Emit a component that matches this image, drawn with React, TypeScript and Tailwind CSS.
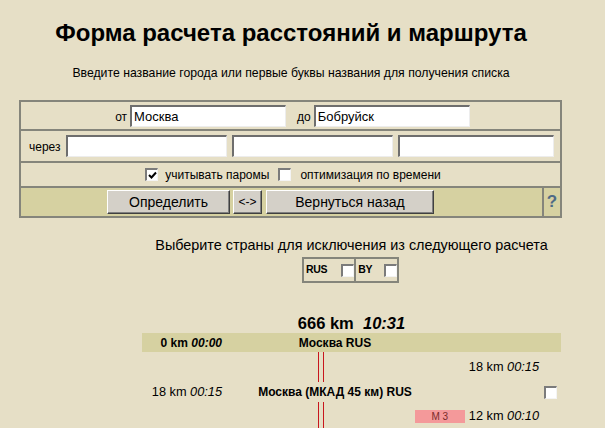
import React from "react";

// Старый "виндовый" чекбокс: белое поле с вдавленной рамкой
function Box({ checked = false }: { checked?: boolean }) {
  return (
    <span className="inline-flex h-[13px] w-[13px] shrink-0 items-center justify-center border-t-2 border-l-2 border-b border-r border-t-[#7b7b7b] border-l-[#7b7b7b] border-b-[#f4f4f4] border-r-[#f4f4f4] bg-white">
      {checked && (
        <svg width="9" height="9" viewBox="0 0 9 9">
          <path d="M1 4 L3.5 6.5 L8 1.5" stroke="#000" strokeWidth="2" fill="none" />
        </svg>
      )}
    </span>
  );
}

function Field({ value = "", w }: { value?: string; w: string }) {
  return (
    <div
      className={`${w} flex h-[22px] items-center border-t-2 border-l-2 border-b border-r border-t-[#6e6e6e] border-l-[#6e6e6e] border-b-[#ededed] border-r-[#ededed] bg-white pl-[2px] text-[13px] text-black`}
    >
      {value}
    </div>
  );
}

function Btn({ children, w }: { children: React.ReactNode; w: string }) {
  return (
    <div
      className={`${w} flex h-[24px] items-center justify-center border border-t-white border-l-white border-b-[#404040] border-r-[#404040] bg-[#d4d0c8] text-[14px] text-black shadow-[inset_-1px_-1px_0_#808080]`}
    >
      {children}
    </div>
  );
}

function RedLine() {
  return <div className="h-full w-[6px] border-l border-r border-[#c8161d]" />;
}

export default function App() {
  return (
    <div className="min-h-[428px] w-[605px] overflow-hidden bg-[#e6dfc6] font-['Liberation_Sans',Arial,sans-serif] text-black">
      <div className="w-[582px]">
        <h1 className="mt-[19px] h-[28px] text-center text-[24px] font-bold leading-[28px]">
          Форма расчета расстояний и маршрута
        </h1>
        <p className="mt-[19px] text-center text-[12.25px] leading-[14px]">
          Введите название города или первые буквы названия для получения списка
        </p>
      </div>

      {/* форма */}
      <div className="ml-[19px] mt-[20px] w-[543px] border-2 border-[#85857b] text-[12px]">
        <div className="flex h-[29px] items-center justify-center border-b-2 border-[#85857b] pt-[1px]">
          <span className="ml-[4px] mr-[3px] self-end pb-[3px]">от</span>
          <Field value="Москва" w="w-[156px]" />
          <span className="ml-[11px] mr-[3px] self-end pb-[3px]">до</span>
          <Field value="Бобруйск" w="w-[156px]" />
        </div>
        <div className="flex h-[32px] items-center gap-[5px] border-b-2 border-[#85857b] pl-[8px]">
          <span className="self-end pb-[5px] text-[12px]">через</span>
          <Field w="w-[161px]" />
          <Field w="w-[161px]" />
          <Field w="w-[156px]" />
        </div>
        <div className="flex h-[25px] items-center justify-center border-b-2 border-[#85857b] pl-[5px]">
          <Box checked />
          <span className="ml-[7px] mr-[9px]">учитывать паромы</span>
          <Box />
          <span className="ml-[9px]">оптимизация по времени</span>
        </div>
        <div className="flex h-[28px] bg-[#d6d1a1]">
          <div className="flex flex-1 items-center pl-[86px]">
            <Btn w="w-[123px]">Определить</Btn>
            <div className="ml-[3px]">
              <Btn w="w-[29px]">
                <span className="text-[12px]">&lt;-&gt;</span>
              </Btn>
            </div>
            <div className="ml-[4px]">
              <Btn w="w-[168px]">Вернуться назад</Btn>
            </div>
          </div>
          <div className="flex w-[18px] items-center justify-center border-l-2 border-[#85857b] text-[17px] font-bold text-[#4e6a86]">
            ?
          </div>
        </div>
      </div>

      {/* исключение стран и маршрут */}
      <div className="ml-[142px] w-[419px]">
        <p className="mt-[19px] text-center text-[14.4px] leading-[16px]">
          Выберите страны для исключения из следующего расчета
        </p>
        <div className="ml-[160px] mt-[4px] flex h-[26px] w-[97px] border-2 border-[#85857b] text-[10.5px] font-bold tracking-[-0.3px]">
          <div className="flex w-[51px] items-center gap-[14px] pl-[2px]">
            <span>RUS</span>
            <Box />
          </div>
          <div className="flex flex-1 items-center gap-[12px] border-l-2 border-[#85857b] pl-[2px]">
            <span>BY</span>
            <Box />
          </div>
        </div>

        <p className="mt-[30px] h-[20px] text-center text-[16.5px] font-bold leading-[20px]">
          666 km&nbsp; <i>10:31</i>
        </p>

        {/* старт */}
        <div className="flex h-[19px] items-center bg-[#d6d1a1] text-[12px] font-bold">
          <div className="w-[88px] pr-[8px] text-right">
            0 km <i>00:00</i>
          </div>
          <div className="w-[210px] text-center">Москва RUS</div>
        </div>

        <div className="flex h-[30px] text-[12.75px]">
          <div className="w-[176px]" />
          <RedLine />
          <div className="flex flex-1 items-center justify-end pr-[22px]">
            18 km&nbsp;<i>00:15</i>
          </div>
        </div>

        <div className="flex h-[20px] items-center text-[12.75px]">
          <div className="w-[88px] pr-[8px] text-right">
            18 km <i>00:15</i>
          </div>
          <div className="w-[210px] text-center text-[12px] font-bold">Москва (МКАД 45 км) RUS</div>
          <div className="flex flex-1 justify-end pr-[4px]">
            <Box />
          </div>
        </div>

        <div className="flex h-[28px] text-[12.75px]">
          <div className="w-[176px]" />
          <RedLine />
          <div className="flex flex-1 items-center justify-end gap-[4px] pr-[22px]">
            <span className="flex h-[13px] w-[50px] items-center justify-center bg-[#f4999a] text-[10px] text-[#7a2b2b]">
              M 3
            </span>
            <span>
              12 km&nbsp;<i>00:10</i>
            </span>
          </div>
        </div>
      </div>
    </div>
  );
}
